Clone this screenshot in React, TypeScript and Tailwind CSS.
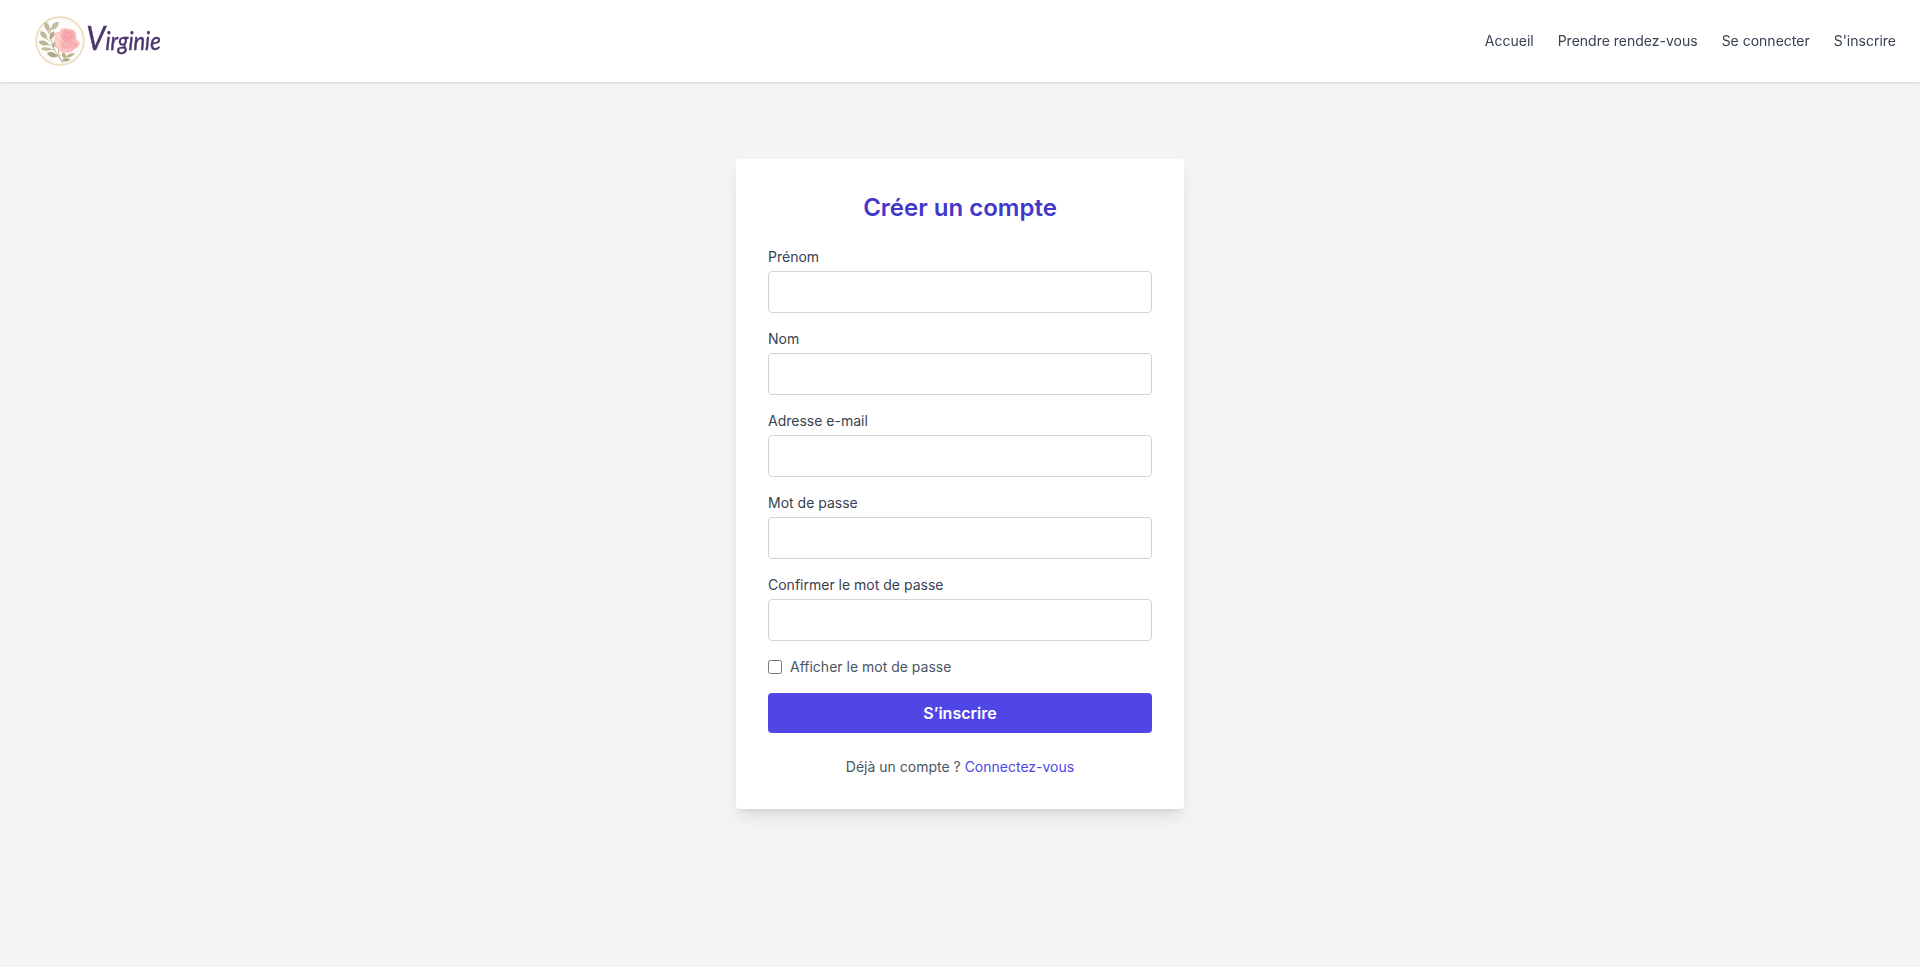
import React from "react";

type Leaf = { x: number; y: number; rx: number; ry: number; angle: number; fill: string };

const leaves: Leaf[] = [
  { x: 105, y: 77, rx: 16, ry: 8, angle: -47, fill: "#c3bf9f" },
  { x: 81, y: 80, rx: 16, ry: 7, angle: 68, fill: "#bdb997" },
  { x: 71, y: 105, rx: 15, ry: 7.5, angle: 48, fill: "#bfba99" },
  { x: 96, y: 106, rx: 14, ry: 6, angle: -62, fill: "#b0ab85" },
  { x: 71, y: 129, rx: 16, ry: 7, angle: 17, fill: "#b8b390" },
  { x: 104, y: 132, rx: 13, ry: 6, angle: -50, fill: "#b9b48e" },
  { x: 79, y: 147, rx: 16, ry: 5.5, angle: 3, fill: "#c4c0a2" },
  { x: 97, y: 164, rx: 17, ry: 7.5, angle: 18, fill: "#afab85" },
  { x: 132, y: 166, rx: 10, ry: 6, angle: 70, fill: "#b8b38b" },
  { x: 151, y: 166, rx: 14, ry: 5, angle: -22, fill: "#b5af86" },
  { x: 139, y: 180, rx: 12, ry: 4.5, angle: -12, fill: "#ada87e" },
];

function Logo() {
  return (
    <svg viewBox="12 48 432 150" className="h-[50px] w-[144px]" role="img" aria-label="Virginie">
      <circle cx="120" cy="123" r="72" fill="#fdfcfb" stroke="#ead7b5" strokeWidth="4" />
      <circle cx="120" cy="123" r="69" fill="none" stroke="#f5ead6" strokeWidth="2" />
      <g fill="none" stroke="#b0ad87" strokeWidth="2.5" strokeLinecap="round">
        <path d="M128 187C113 164 87 137 91 85" />
        <path d="M91 92L98 84M86 100L82 88M88 122L75 113M92 136L77 133M101 149L87 148M113 166L102 165" />
        <path d="M128 187C117 172 114 157 116 142M127 180L146 169" />
      </g>
      {leaves.map((l, i) => (
        <path
          key={i}
          d={`M${-l.rx} 0C${-l.rx / 2} ${-l.ry * 1.35} ${l.rx / 2} ${-l.ry * 1.25} ${l.rx} 0C${l.rx / 2} ${l.ry * 1.25} ${-l.rx / 2} ${l.ry * 1.35} ${-l.rx} 0Z`}
          transform={`translate(${l.x} ${l.y}) rotate(${l.angle})`}
          fill={l.fill}
        />
      ))}
      <path
        d="M118 95C122 84 136 82 148 88C160 86 169 95 168 107C168 114 170 121 179 127C180 136 172 145 162 148C157 158 144 161 136 157C127 160 118 156 119 146C107 146 102 139 107 131C101 125 103 117 108 113C99 106 101 97 118 95Z"
        fill="#fbbfc0"
      />
      <path d="M104 101C113 94 124 100 127 113L121 142C106 142 103 135 108 127C100 122 101 113 108 110Z" fill="#fccfcd" />
      <path d="M126 98C135 86 154 87 162 98C170 112 161 128 146 131C128 129 119 115 126 98Z" fill="#f9adb1" />
      <path d="M131 101C139 93 151 93 157 101C159 113 151 121 141 119C133 117 128 110 131 101Z" fill="#f69ea6" />
      <path d="M137 104C142 98 150 99 153 105C151 112 142 114 137 104Z" fill="#f8abb0" />
      <path d="M119 121C128 132 142 135 153 129C164 125 173 129 173 136C164 151 143 154 125 142Z" fill="#f9b0b4" />
      <path d="M120 143C130 149 144 148 156 141C153 154 141 158 133 153C127 157 120 151 120 143Z" fill="#fbc1c2" />
      <g fill="none" stroke="#f3909b" strokeWidth="1.6" strokeLinecap="round" opacity="0.6">
        <path d="M110 116C119 118 122 127 130 132M124 105C126 117 135 126 148 126M129 97C136 90 147 90 155 96M156 130C164 127 169 130 171 135" />
      </g>
      <text
        x="199"
        y="150"
        textLength="223"
        lengthAdjust="spacingAndGlyphs"
        fill="#4b366f"
        stroke="#4b366f"
        strokeWidth="1.4"
        strokeLinejoin="round"
        fontFamily="Lato, sans-serif"
        fontStyle="italic"
        fontSize="73"
      >
        <tspan fontSize="101">V</tspan>irginie
      </text>
    </svg>
  );
}

const links = ["Accueil", "Prendre rendez-vous", "Se connecter", "S'inscrire"];

const fields = [
  { id: "firstName", label: "Prénom", type: "text" },
  { id: "lastName", label: "Nom", type: "text" },
  { id: "email", label: "Adresse e-mail", type: "email" },
  { id: "password", label: "Mot de passe", type: "password" },
  { id: "confirm", label: "Confirmer le mot de passe", type: "password" },
];

export default function App() {
  const [visible, setVisible] = React.useState(false);

  return (
    <div className="min-h-screen bg-[#f3f4f6] font-['Inter',sans-serif]">
      <header className="fixed inset-x-0 top-0 z-10 flex items-center justify-between bg-white px-6 py-4 shadow">
        <a href="#"><span className="block h-[50px]"><Logo /></span></a>
        <nav className="flex gap-6 text-sm text-[#374151]">
          {links.map((link) => (
            <a key={link} href="#">{link}</a>
          ))}
        </nav>
      </header>
      <main className="flex min-h-screen items-center justify-center">
        <div className="w-full max-w-md rounded bg-white p-8 shadow-lg">
          <h2 className="mb-6 pt-0.5 text-center text-2xl leading-[30px] font-semibold text-[#4338ca]">Créer un compte</h2>
          <form className="space-y-4" onSubmit={(e) => e.preventDefault()}>
            {fields.map((f) => (
              <div key={f.id}>
                <label htmlFor={f.id} className="block text-sm text-[#374151]">{f.label}</label>
                <input
                  id={f.id}
                  type={f.type === "password" && visible ? "text" : f.type}
                  className="mt-1 block h-[42px] w-full rounded border border-[#d1d5db] px-3 py-2"
                />
              </div>
            ))}
            <label className="flex items-center text-sm text-[#4b5563]">
              <input
                type="checkbox"
                checked={visible}
                onChange={(e) => setVisible(e.target.checked)}
                className="mr-2 h-3.5 w-3.5"
              />
              Afficher le mot de passe
            </label>
            <button type="submit" className="block h-10 w-full rounded bg-[#4f46e5] font-semibold text-white">
              S’inscrire
            </button>
          </form>
          <p className="mt-6 text-center text-sm text-[#4b5563]">
            Déjà un compte ? <a href="#" className="text-[#4f46e5]">Connectez-vous</a>
          </p>
        </div>
      </main>
    </div>
  );
}
